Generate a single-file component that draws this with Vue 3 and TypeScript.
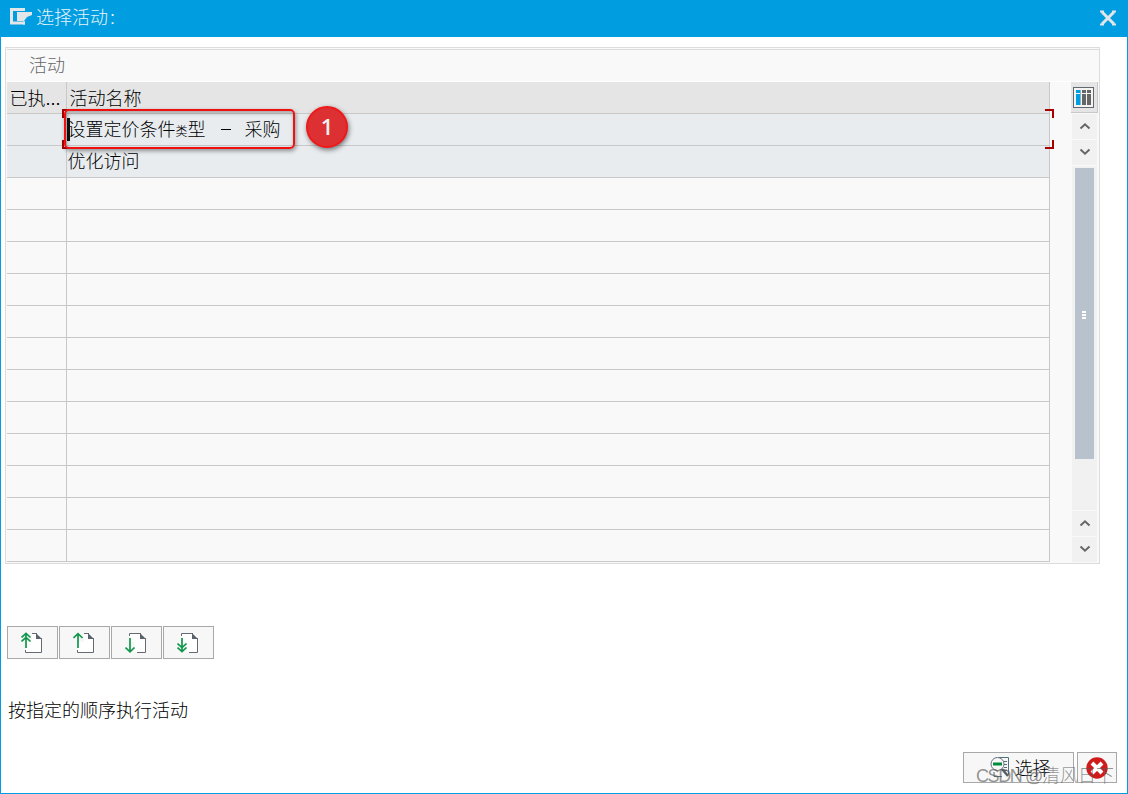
<script setup lang="ts">
interface Activity {
  done: string
  name: string
}

const activities: Activity[] = [
  { done: '', name: '设置定价条件类型 － 采购' },
  { done: '', name: '优化访问' },
]
const emptyRows = 12

const navButtons = [
  { id: 'first', up: true, double: true },
  { id: 'prev', up: true, double: false },
  { id: 'next', up: false, double: false },
  { id: 'last', up: false, double: true },
]
</script>

<template>
  <div class="dialog">
    <header class="titlebar">
      <svg class="logo" width="23" height="17" viewBox="0 0 23 17">
        <path d="M15 1.500H1.500v13.500H15" fill="none" stroke="#e3e6e8" stroke-width="3" />
        <path d="M7 4h15v3l-5 2-3 4H7z" fill="#e3e6e8" />
        <path d="M14 0v3M14 13.500v3" stroke="#e3e6e8" stroke-width="2" />
      </svg>
      <span class="title">选择活动<span class="colon">:</span></span>
      <svg class="close" width="16" height="16" viewBox="0 0 16 16">
        <path d="M2 2l12 12M14 2L2 14" stroke="#e3e6e8" stroke-width="3" />
        <path d="M0 1.500h4M12 1.500h4M0 14.500h4M12 14.500h4" stroke="#e3e6e8" stroke-width="2" />
      </svg>
    </header>

    <section class="panel">
      <div class="panel-title">活动</div>
      <div class="panel-body">
        <div class="table">
          <div class="row head">
            <div class="cell state">已执<span class="dots">...</span></div>
            <div class="cell name">活动名称</div>
          </div>
          <div v-for="(item, i) in activities" :key="item.name" class="row active">
            <div class="cell state">{{ item.done }}</div>
            <div class="cell name">
              <template v-if="i === 0">
                <span class="caret"></span>设置定价条件<span class="small">类</span>型<span class="dash"></span>采购
                <span class="focus tl"></span><span class="focus bl"></span>
                <span class="focus tr"></span><span class="focus br"></span>
                <span class="callout"></span>
                <span class="badge">1</span>
              </template>
              <template v-else>{{ item.name }}</template>
            </div>
          </div>
          <div v-for="n in emptyRows" :key="n" class="row">
            <div class="cell state"></div>
            <div class="cell name"></div>
          </div>
        </div>

        <div class="scroller">
          <div class="config">
            <svg width="21" height="21" viewBox="0 0 21 21">
              <rect x=".5" y=".5" width="20" height="20" fill="#f4f4f4" stroke="#626970" />
              <path d="M3 3h5v3H3z M3 7h5v11H3z" fill="#009de0" />
              <path d="M9 3h4v3H9z M9 7h4v11H9z M14 3h4v3h-4z M14 7h4v11h-4z" fill="#666" />
              <path d="M7.500 3v15" stroke="#8fb3c4" />
            </svg>
          </div>
          <div class="step"><svg width="12" height="8" viewBox="0 0 12 8"><path d="M1.500 6.500L6 2.300l4.500 4.200" /></svg></div>
          <div class="step"><svg width="12" height="8" viewBox="0 0 12 8"><path d="M1.500 1.500L6 5.700l4.500-4.200" /></svg></div>
          <div class="track">
            <div class="thumb"><i></i><i></i><i></i></div>
          </div>
          <div class="step"><svg width="12" height="8" viewBox="0 0 12 8"><path d="M1.500 6.500L6 2.300l4.500 4.200" /></svg></div>
          <div class="step last"><svg width="12" height="8" viewBox="0 0 12 8"><path d="M1.500 1.500L6 5.700l4.500-4.200" /></svg></div>
        </div>
      </div>
    </section>

    <div class="nav">
      <button v-for="b in navButtons" :key="b.id" class="btn">
        <svg v-if="b.up" width="22" height="22" viewBox="0 0 22 22">
          <path d="M11 1h5l5 5v14H5V10h6z" fill="#fff" />
          <path d="M11 1.500h5M20.500 6v14.500H4.500V18" fill="none" stroke="#666a72" />
          <path d="M15 1l6 6h-6z" fill="#5c626b" />
          <path v-if="b.double" d="M5 2v14M.5 5.500L5 1.300l4.500 4.200M.5 9.500L5 5.300l4.500 4.200" class="arrow" />
          <path v-else d="M5 2v14M.5 6L5 1.700 9.500 6" class="arrow" />
        </svg>
        <svg v-else width="22" height="22" viewBox="0 0 22 22">
          <path d="M5 1h11l5 5v14H10V10H5z" fill="#fff" />
          <path d="M4.500 4V1.500H16M20.500 6v14.500H12" fill="none" stroke="#666a72" />
          <path d="M15 1l6 6h-6z" fill="#5c626b" />
          <path v-if="b.double" d="M5 6v14M.5 11.500L5 15.700l4.500-4.200M.5 15.500L5 19.700l4.500-4.200" class="arrow" />
          <path v-else d="M5 6v14M.5 15.500L5 19.800l4.500-4.300" class="arrow" />
        </svg>
      </button>
    </div>

    <p class="hint">按指定的顺序执行活动</p>

    <footer class="actions">
      <button class="btn choose">
        <svg width="20" height="21" viewBox="0 0 20 21">
          <path d="M8 .5h10.500V18M4 15v4.500h8M13 4.500h4M14 7.500h3M14 10.500h3M13 13.500h4" fill="none" stroke="#52717b" />
          <path d="M12 12l6 7" stroke="#555d66" stroke-width="2.500" />
          <circle cx="7.500" cy="7" r="6.500" fill="#f7f7f7" stroke="#66727a" />
          <path d="M3 7h9" stroke="#008c3c" stroke-width="3" />
        </svg>
        <span class="choose-text">选择</span>
      </button>
      <button class="btn cancel">
        <svg width="22" height="22" viewBox="0 0 22 22">
          <circle cx="11" cy="11" r="10.700" fill="#cf1b1b" />
          <path d="M6 6l10 10M16 6L6 16" stroke="#fff" stroke-width="4" />
        </svg>
      </button>
      <span class="watermark"><span class="site">CSDN @</span>清风日下</span>
    </footer>
  </div>
</template>

<style>
body {
  margin: 0;
  overflow: hidden;
}
</style>

<style scoped>
.dialog {
  box-sizing: border-box;
  width: 1128px;
  height: 794px;
  display: flex;
  flex-direction: column;
  background: #fff;
  border: 1px solid #009de0;
  border-top: 0;
  font-family: "Liberation Sans", "Noto Sans CJK SC", sans-serif;
  font-size: 18px;
  font-weight: 300;
  color: #000;
}
.titlebar {
  flex: none;
  box-sizing: border-box;
  height: 37px;
  display: flex;
  align-items: center;
  padding: 0 11px 5px 9px;
  background: #009de0;
  color: #e6f3fa;
}
.logo {
  margin-right: 3px;
}
.title {
  flex: 1;
}
.colon {
  margin-left: 2px;
}
.close {
  margin-top: 4px;
}
.panel {
  flex: none;
  box-sizing: border-box;
  width: 1095px;
  height: 517px;
  margin: 10px 0 0 4px;
  padding: 1px 0 0 1px;
  border: 1px solid #dcdcdc;
  background: #f9f9f9;
}
.panel-title {
  box-sizing: border-box;
  height: 33px;
  padding-left: 22px;
  border-top: 1px solid #dcdcdc;
  border-bottom: 1px solid #fff;
  line-height: 33px;
  color: #666;
}
.panel-body {
  display: flex;
  justify-content: space-between;
}
.table {
  width: 1043px;
}
.row {
  display: grid;
  grid-template-columns: 60px 983px;
  height: 32px;
}
.cell {
  position: relative;
  box-sizing: border-box;
  height: 32px;
  padding-left: .5px;
  border-right: 1px solid #c8c8c8;
  border-bottom: 1px solid #c8c8c8;
  line-height: 33px;
  white-space: nowrap;
}
.head .cell {
  background: #e5e5e5;
  padding-left: 2.5px;
  line-height: 34px;
}
.active .cell {
  background: #e8ecef;
}
.small {
  font-size: 12px;
  line-height: 1;
}
.dash {
  display: inline-block;
  width: 10px;
  height: 1px;
  margin: 0 14px 0 15px;
  background: #000;
  vertical-align: 6px;
}
.caret {
  position: absolute;
  left: 0;
  top: 4px;
  width: 3px;
  height: 23px;
  background: #111;
}
.focus {
  position: absolute;
  z-index: 1;
  width: 9px;
  height: 9px;
  box-sizing: border-box;
  border: 0 solid #a60000;
}
.tl { left: -5px; top: -5px; border-width: 2px 0 0 2px; }
.bl { left: -5px; top: 26px; border-width: 0 0 2px 2px; }
.tr { right: -5px; top: -5px; border-width: 2px 2px 0 0; }
.br { right: -5px; top: 26px; border-width: 0 2px 2px 0; }
.callout {
  position: absolute;
  z-index: 1;
  left: -3px;
  top: -5px;
  box-sizing: border-box;
  width: 231px;
  height: 40px;
  border: 2px solid #f01010;
  border-radius: 5px;
  box-shadow: 1px 2px 4px rgba(0, 0, 0, .4), inset 1px 2px 4px rgba(0, 0, 0, .3);
}
.badge {
  position: absolute;
  z-index: 1;
  left: 239px;
  top: -8px;
  box-sizing: border-box;
  width: 42px;
  height: 42px;
  border: 2px solid #f01818;
  border-radius: 50%;
  background: #dc3032;
  color: #f0f0f0;
  font: 22px/36px "Open Sans", sans-serif;
  font-weight: 600;
  text-align: center;
  box-shadow: 1px 2px 5px rgba(0, 0, 0, .5);
}
.scroller {
  display: flex;
  flex-direction: column;
  align-items: flex-end;
  width: 27px;
  height: 480px;
  margin-right: 1px;
}
.config {
  flex: none;
  box-sizing: border-box;
  width: 27px;
  height: 31px;
  padding-right: 2px;
  display: grid;
  place-items: center;
  background: #e5e5e5;
  border-right: 1px solid #c8c8c8;
  border-bottom: 1px solid #c8c8c8;
  margin-bottom: 1px;
}
.step {
  flex: none;
  box-sizing: border-box;
  width: 25px;
  height: 25px;
  padding-bottom: 2px;
  display: grid;
  place-items: center;
  margin: 0 1px 1px 0;
  background: #f1f1f1;
}
.step.last {
  margin-bottom: 0;
}
.step path {
  fill: none;
  stroke: #666;
  stroke-width: 2;
}
.track {
  flex: 1;
  box-sizing: border-box;
  width: 25px;
  padding-top: 2px;
  margin: 0 1px 1px 0;
  background: #f1f1f1;
}
.thumb {
  box-sizing: border-box;
  width: 19px;
  height: 291px;
  padding: 2px 1px 0 0;
  margin-left: 3px;
  display: flex;
  flex-direction: column;
  align-items: center;
  justify-content: center;
  gap: 1px;
  background: #b8c2cd;
}
.thumb i {
  width: 4px;
  height: 2px;
  background: #fff;
}
.nav {
  display: flex;
  gap: 1px;
  margin: 62px 0 0 6px;
}
.btn {
  box-sizing: border-box;
  width: 51px;
  height: 33px;
  padding: 0 1px 0 0;
  display: flex;
  align-items: center;
  justify-content: center;
  background: #f7f7f7;
  border: 1px solid #a8a8a8;
  font: inherit;
  color: inherit;
}
.arrow {
  fill: none;
  stroke: #12964d;
  stroke-width: 1.7;
}
.hint {
  margin: 37px 0 0 7px;
  line-height: 31px;
}
.actions {
  position: relative;
  display: flex;
  justify-content: flex-end;
  gap: 3px;
  margin: 25px 10px 0 0;
}
.choose {
  width: 111px;
  height: 31px;
  gap: 5px;
  padding: 0 0 0 3px;
}
.choose-text {
  margin-top: -2px;
}
.cancel {
  width: 40px;
  height: 31px;
  padding: 0;
}
.watermark {
  position: absolute;
  left: 975px;
  top: 12px;
  line-height: 24px;
  white-space: nowrap;
  color: rgba(90, 90, 90, .65);
}
.site {
  letter-spacing: -1.4px;
}
</style>
